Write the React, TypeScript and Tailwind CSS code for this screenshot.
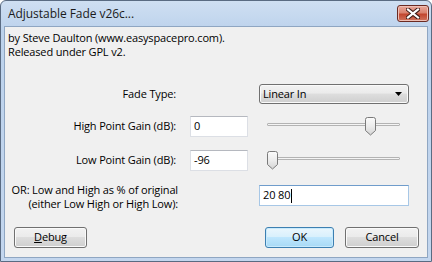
import React from "react";

const font = { fontFamily: '"Open Sans", "Noto Sans", sans-serif' };

function Thumb() {
  return (
    <svg width="12" height="19" viewBox="0 0 12 19" className="block">
      <defs>
        <linearGradient id="tg" x1="0" y1="0" x2="0" y2="1">
          <stop offset="0" stopColor="#fbfbfb" />
          <stop offset="0.5" stopColor="#ececec" />
          <stop offset="1" stopColor="#d4d4d4" />
        </linearGradient>
      </defs>
      <path
        d="M0.5 2.5 Q0.5 0.5 2.5 0.5 H8.5 Q10.5 0.5 10.5 2.5 V13.5 L5.5 18 L0.5 13.5 Z"
        fill="url(#tg)"
        stroke="#7a7a7a"
        strokeWidth="1"
      />
    </svg>
  );
}

function Slider({ pos }: { pos: number }) {
  return (
    <div className="relative w-[150px] h-[21px] ml-[11px]">
      <div className="absolute left-[8px] right-[9px] top-[7px] h-[3px] border border-[#b3b3b3] bg-[#f4f4f4] rounded-[1px]" />
      <div className="absolute top-[1px]" style={{ left: pos }}>
        <Thumb />
      </div>
    </div>
  );
}

function TextBox({ value, w, focused }: { value: string; w: string; focused?: boolean }) {
  return (
    <div
      className={`${w} h-[21px] bg-white border flex items-center pl-[3px] text-black ${
        focused
          ? "border-[#a7c7e6] border-t-[#6f9ccb]"
          : "border-[#dcdfe5] border-t-[#b5b8bf]"
      }`}
    >
      <span>{value}</span>
      {focused && <span className="w-px h-[14px] bg-black ml-[1px]" />}
    </div>
  );
}

function Button({ children, primary, w }: { children: React.ReactNode; primary?: boolean; w: string }) {
  return (
    <div
      className={`${w} h-[21px] rounded-[3px] border flex items-center justify-center text-black ${
        primary
          ? "border-[#3c7fb1] bg-[linear-gradient(#eaf6fd_0%,#d9f0fc_45%,#bee6fd_50%,#a7d9f5_100%)] shadow-[inset_0_0_0_1px_#c8eafc]"
          : "border-[#707070] bg-[linear-gradient(#f2f2f2_0%,#ebebeb_45%,#dddddd_50%,#cfcfcf_100%)] shadow-[inset_0_0_0_1px_#fafafa]"
      }`}
    >
      {children}
    </div>
  );
}

export default function App() {
  return (
    <div style={font} className="w-[432px] h-[262px] bg-white">
      <div className="w-[432px] h-[262px] border border-[#5a6b82] rounded-t-[6px] bg-[linear-gradient(#cfdff2,#bcd2ec_30px,#c3d6ee)] flex flex-col">
        <div className="h-[25px] flex items-start shrink-0">
          <div className="pl-[7px] pt-[4px] text-[12px] tracking-[-0.05px] leading-[18px] text-[#1b1b1b] flex-1">
            Adjustable Fade v26c...
          </div>
          <div className="mt-[4px] mr-[2px] w-[32px] h-[17px] rounded-[3px] border border-[#6b2a22] bg-[linear-gradient(#e9a79a,#d9826f_45%,#c2462f_55%,#d0745e)] flex items-center justify-center shadow-[inset_0_0_0_1px_#eebfb5]">
            <svg width="14" height="11" viewBox="0 0 14 11">
              <path
                d="M2 1.5 L12 9.5 M12 1.5 L2 9.5"
                stroke="#3d1a15"
                strokeWidth="4.2"
                strokeLinecap="square"
              />
              <path
                d="M2 1.5 L12 9.5 M12 1.5 L2 9.5"
                stroke="#ffffff"
                strokeWidth="2.2"
                strokeLinecap="square"
              />
            </svg>
          </div>
        </div>
        <div className="flex-1 mx-[3px] mb-[3px] border border-[#8fa6c2] bg-[#f0f0f0] flex flex-col text-[11px] tracking-[-0.15px] text-black whitespace-nowrap">
          <div className="pl-[3px] pt-[4px] leading-[14px]">
            <div>by Steve Daulton (www.easyspacepro.com).</div>
            <div>Released under GPL v2.</div>
          </div>

          <div className="mt-[25px] h-[20px] flex items-center">
            <div className="w-[171px] text-right">Fade Type:</div>
            <div className="ml-[83px] w-[150px] h-[20px] rounded-[3px] border border-[#707070] bg-[linear-gradient(#f2f2f2_0%,#ebebeb_45%,#dddddd_50%,#cfcfcf_100%)] shadow-[inset_0_0_0_1px_#fafafa] flex items-center pl-[3px] pr-[6px]">
              <span className="flex-1">Linear In</span>
              <svg width="7" height="4" viewBox="0 0 7 4">
                <path d="M0 0 H7 L3.5 4 Z" fill="#000" />
              </svg>
            </div>
          </div>

          <div className="mt-[12px] h-[21px] flex items-center">
            <div className="w-[171px] text-right">High Point Gain (dB):</div>
            <div className="ml-[14px]">
              <TextBox value="0" w="w-[58px]" />
            </div>
            <Slider pos={106} />
          </div>

          <div className="mt-[13px] h-[21px] flex items-center">
            <div className="w-[171px] text-right">Low Point Gain (dB):</div>
            <div className="ml-[14px]">
              <TextBox value="-96" w="w-[58px]" />
            </div>
            <Slider pos={8} />
          </div>

          <div className="mt-[12px] h-[28px] flex items-start">
            <div className="w-[173px] text-right leading-[14px]">
              <div>OR: Low and High as % of original</div>
              <div>(either Low High or High Low):</div>
            </div>
            <div className="ml-[81px] mt-[2px]">
              <TextBox value="20 80" w="w-[150px]" focused />
            </div>
          </div>

          <div className="mt-[16px] flex items-center">
            <div className="ml-[9px]">
              <Button w="w-[73px]">
                <span>
                  <span className="underline">D</span>ebug
                </span>
              </Button>
            </div>
            <div className="ml-[178px]">
              <Button w="w-[69px]" primary>
                OK
              </Button>
            </div>
            <div className="ml-[11px]">
              <Button w="w-[74px]">Cancel</Button>
            </div>
          </div>
        </div>
      </div>
    </div>
  );
}
